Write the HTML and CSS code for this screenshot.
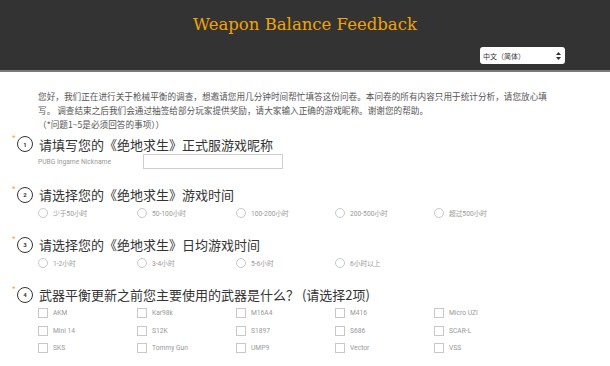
FILE: index.html
```html
<!DOCTYPE html>
<html lang="zh-CN">
<head>
    <meta charset="UTF-8">
    <meta name="viewport" content="width=device-width, initial-scale=1.0">
    <title>Weapon Balance Feedback</title>
    <link rel="stylesheet" href="styles.css">
</head>
<body>
    <div class="header">
        <div class="title">Weapon Balance Feedback</div>
        <div class="lang-row">
            <div class="lang-select">
                <span>中文（简体）</span>
                <svg width="5" height="8" viewBox="0 0 5 8"><path d="M2.5 0 L5 3 L0 3 Z M0 5 L5 5 L2.5 8 Z" fill="#333"/></svg>
            </div>
        </div>
    </div>

    <div class="survey">
        <div class="intro">
            <p>您好，我们正在进行关于枪械平衡的调查，想邀请您用几分钟时间帮忙填答这份问卷。本问卷的所有内容只用于统计分析，请您放心填写。 调查结束之后我们会通过抽签给部分玩家提供奖励，请大家输入正确的游戏昵称。谢谢您的帮助。</p>
            <p>（*问题1~5是必须回答的事项））</p>
        </div>

        <div class="question q1">
            <div class="q-head">
                <span class="star">*</span>
                <span class="num">1</span>
                <span class="q-title">请填写您的《绝地求生》正式服游戏昵称</span>
            </div>
            <div class="nick-row">
                <span class="nick-label">PUBG Ingame Nickname</span>
                <div class="nick-input"></div>
            </div>
        </div>

        <div class="question">
            <div class="q-head">
                <span class="star">*</span>
                <span class="num">2</span>
                <span class="q-title">请选择您的《绝地求生》游戏时间</span>
            </div>
            <div class="options">
                <label class="opt"><span class="radio"></span>少于50小时</label>
                <label class="opt"><span class="radio"></span>50-100小时</label>
                <label class="opt"><span class="radio"></span>100-200小时</label>
                <label class="opt"><span class="radio"></span>200-500小时</label>
                <label class="opt"><span class="radio"></span>超过500小时</label>
            </div>
        </div>

        <div class="question">
            <div class="q-head">
                <span class="star">*</span>
                <span class="num">3</span>
                <span class="q-title">请选择您的《绝地求生》日均游戏时间</span>
            </div>
            <div class="options">
                <label class="opt"><span class="radio"></span>1-2小时</label>
                <label class="opt"><span class="radio"></span>3-4小时</label>
                <label class="opt"><span class="radio"></span>5-6小时</label>
                <label class="opt"><span class="radio"></span>6小时以上</label>
            </div>
        </div>

        <div class="question">
            <div class="q-head">
                <span class="star">*</span>
                <span class="num">4</span>
                <span class="q-title">武器平衡更新之前您主要使用的武器是什么？ (请选择2项)</span>
            </div>
            <div class="options checks">
                <label class="opt"><span class="box"></span>AKM</label>
                <label class="opt"><span class="box"></span>Kar98k</label>
                <label class="opt"><span class="box"></span>M16A4</label>
                <label class="opt"><span class="box"></span>M416</label>
                <label class="opt"><span class="box"></span>Micro UZI</label>
                <label class="opt"><span class="box"></span>Mini 14</label>
                <label class="opt"><span class="box"></span>S12K</label>
                <label class="opt"><span class="box"></span>S1897</label>
                <label class="opt"><span class="box"></span>S686</label>
                <label class="opt"><span class="box"></span>SCAR-L</label>
                <label class="opt"><span class="box"></span>SKS</label>
                <label class="opt"><span class="box"></span>Tommy Gun</label>
                <label class="opt"><span class="box"></span>UMP9</label>
                <label class="opt"><span class="box"></span>Vector</label>
                <label class="opt"><span class="box"></span>VSS</label>
            </div>
        </div>
    </div>
</body>
</html>
```

FILE: styles.css
```css
  body {
      margin: 0;
      background: #ffffff;
      font-family: Roboto, "Noto Sans CJK SC", sans-serif;
      color: #444;
  }
  .header {
      background: #333333;
      border-bottom: 2px solid #7a7a7a;
      display: flex;
      flex-direction: column;
      padding-top: 11px;
      height: 59px;
  }
  .title {
      font-family: "DejaVu Serif", "Liberation Serif", serif;
      font-size: 16.5px;
      line-height: 28px;
      color: #f0a30a;
      text-align: center;
  }
  .lang-row {
      display: flex;
      justify-content: flex-end;
      padding-right: 45px;
      margin-top: 8px;
  }
  .lang-select {
      width: 85px;
      height: 17px;
      box-sizing: border-box;
      background: #ffffff;
      border-radius: 3px;
      display: flex;
      align-items: center;
      justify-content: space-between;
      padding: 0 4px 0 3px;
      font-family: "Noto Sans CJK SC", sans-serif;
      font-size: 7px;
      color: #333;
  }
  .survey {
      padding-bottom: 20px;
  }
  .intro {
      margin: 17px 0 0 38px;
      width: 516px;
      font-family: "Noto Sans CJK SC", sans-serif;
      font-size: 8.65px;
      line-height: 14px;
      color: #555;
  }
  .intro p {
      margin: 0;
  }
  .question {
      margin-top: 16.5px;
  }
  .question.q1 {
      margin-top: 4px;
  }
  .q-head {
      display: flex;
      align-items: center;
      height: 18px;
      padding-left: 12px;
  }
  .star {
      width: 5px;
      align-self: flex-start;
      color: #f5a623;
      font-size: 8px;
      line-height: 8px;
      margin-top: -1px;
  }
  .num {
      width: 16px;
      height: 16px;
      box-sizing: border-box;
      border: 1.5px solid #333;
      border-radius: 50%;
      display: flex;
      align-items: center;
      justify-content: center;
      font-size: 6px;
      font-weight: bold;
      color: #333;
  }
  .q-title {
      margin-left: 6px;
      font-family: "Noto Sans CJK SC", sans-serif;
      font-size: 13px;
      color: #333;
  }
  .nick-row {
      display: flex;
      align-items: center;
      margin-top: 1px;
      padding-left: 38px;
  }
  .nick-label {
      width: 105px;
      font-size: 6.7px;
      color: #999;
  }
  .nick-input {
      width: 140px;
      height: 15px;
      box-sizing: border-box;
      border: 1px solid #cfcfcf;
  }
  .options {
      display: grid;
      grid-template-columns: repeat(5, 99px);
      padding-left: 38px;
      margin-top: 3.5px;
  }
  .checks {
      row-gap: 5.5px;
  }
  .opt {
      display: flex;
      align-items: center;
      height: 12px;
      font-family: Roboto, "Noto Sans CJK SC", sans-serif;
      font-size: 6.7px;
      color: #999;
  }
  .radio {
      width: 10px;
      height: 10px;
      box-sizing: border-box;
      border: 1px solid #c8c8c8;
      border-radius: 50%;
      margin-right: 5px;
  }
  .box {
      width: 10px;
      height: 10px;
      box-sizing: border-box;
      border: 1px solid #c8c8c8;
      margin-right: 5px;
  }
```
